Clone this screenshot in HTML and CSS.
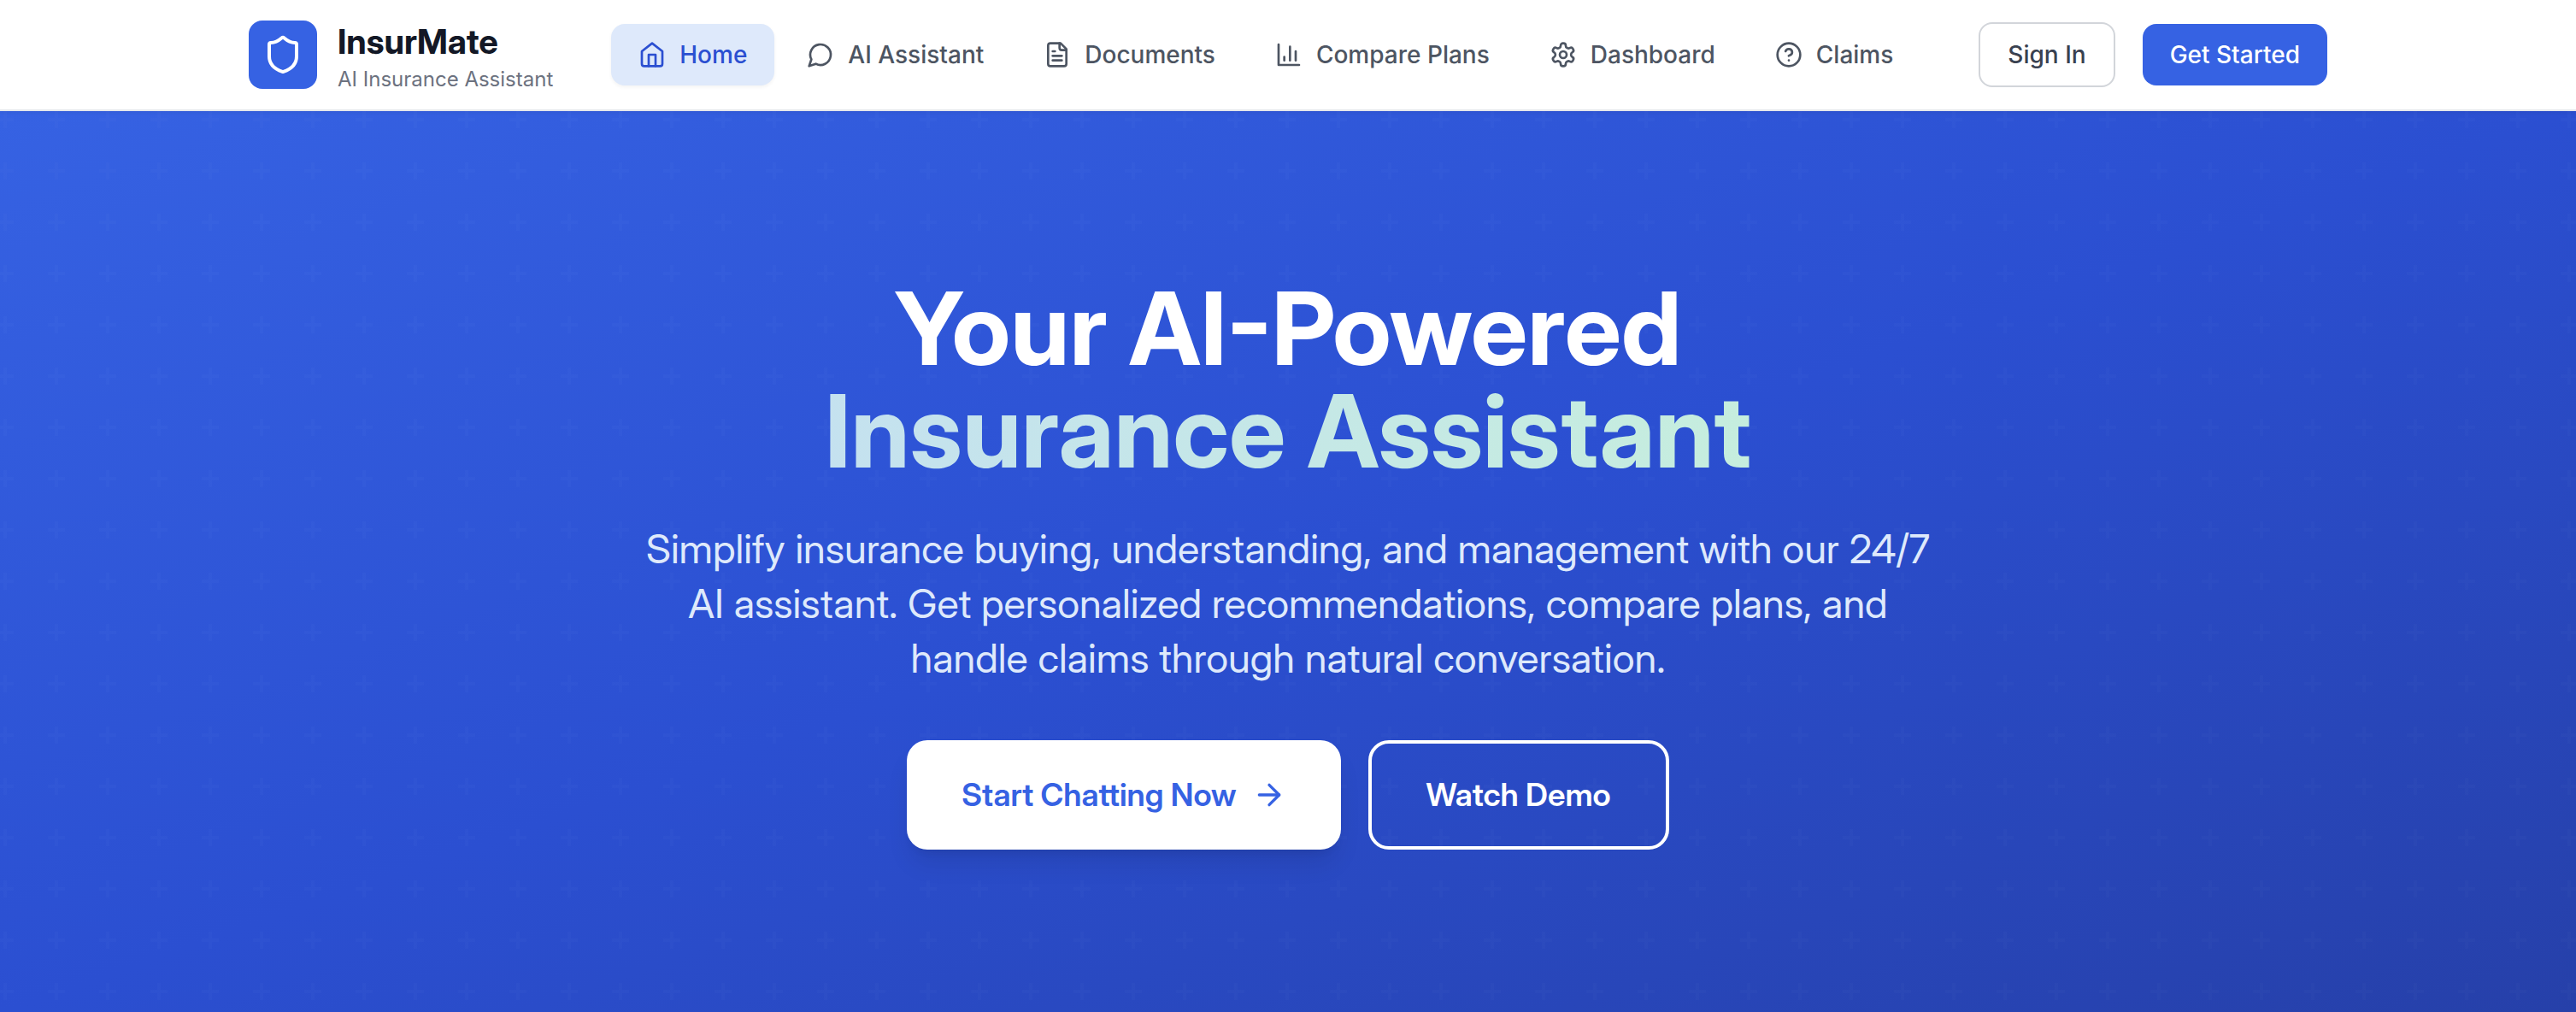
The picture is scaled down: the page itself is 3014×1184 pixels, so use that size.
FILE: index.html
```html
<!DOCTYPE html>
<html lang="en">
<head>
<meta charset="utf-8">
<meta name="viewport" content="width=device-width, initial-scale=1">
<title>InsurMate - AI Insurance Assistant</title>
<link rel="stylesheet" href="styles.css">
</head>
<body>
<header class="header">
  <div class="header-inner">
    <a class="brand" href="#">
      <span class="brand-mark">
        <svg class="icon icon-lg" viewBox="0 0 24 24"><path d="M20 13c0 5-3.500 7.500-7.660 8.950a1 1 0 0 1-.670-.010C7.500 20.500 4 18 4 13V6a1 1 0 0 1 1-1c2 0 4.500-1.200 6.240-2.720a1.170 1.170 0 0 1 1.520 0C14.510 3.810 17 5 19 5a1 1 0 0 1 1 1z"/></svg>
      </span>
      <span class="brand-text">
        <span class="brand-name">InsurMate</span>
        <span class="brand-tagline">AI Insurance Assistant</span>
      </span>
    </a>
    <nav class="nav" aria-label="Main">
      <a class="nav-link nav-link-active" href="#" aria-current="page">
        <svg class="icon" viewBox="0 0 24 24"><path d="m3 9 9-7 9 7v11a2 2 0 0 1-2 2H5a2 2 0 0 1-2-2z"/><path d="M9 22V12h6v10"/></svg>
        Home
      </a>
      <a class="nav-link" href="#">
        <svg class="icon" viewBox="0 0 24 24"><path d="M7.900 20A9 9 0 1 0 4 16.100L2 22Z"/></svg>
        AI Assistant
      </a>
      <a class="nav-link" href="#">
        <svg class="icon" viewBox="0 0 24 24"><path d="M15 2H6a2 2 0 0 0-2 2v16a2 2 0 0 0 2 2h12a2 2 0 0 0 2-2V7Z"/><path d="M14 2v4a2 2 0 0 0 2 2h4"/><path d="M10 9H8"/><path d="M16 13H8"/><path d="M16 17H8"/></svg>
        Documents
      </a>
      <a class="nav-link" href="#">
        <svg class="icon" viewBox="0 0 24 24"><path d="M3 3v18h18"/><path d="M18 17V9"/><path d="M13 17V5"/><path d="M8 17v-3"/></svg>
        Compare Plans
      </a>
      <a class="nav-link" href="#">
        <svg class="icon" viewBox="0 0 24 24"><path d="M12.220 2h-.440a2 2 0 0 0-2 2v.180a2 2 0 0 1-1 1.730l-.430.250a2 2 0 0 1-2 0l-.150-.080a2 2 0 0 0-2.730.730l-.220.380a2 2 0 0 0 .730 2.730l.150.100a2 2 0 0 1 1 1.720v.510a2 2 0 0 1-1 1.740l-.150.090a2 2 0 0 0-.730 2.730l.220.380a2 2 0 0 0 2.730.730l.150-.080a2 2 0 0 1 2 0l.430.250a2 2 0 0 1 1 1.730V20a2 2 0 0 0 2 2h.440a2 2 0 0 0 2-2v-.180a2 2 0 0 1 1-1.730l.430-.250a2 2 0 0 1 2 0l.150.080a2 2 0 0 0 2.730-.730l.220-.390a2 2 0 0 0-.730-2.730l-.150-.080a2 2 0 0 1-1-1.740v-.500a2 2 0 0 1 1-1.740l.150-.090a2 2 0 0 0 .730-2.730l-.220-.380a2 2 0 0 0-2.730-.730l-.150.080a2 2 0 0 1-2 0l-.430-.250a2 2 0 0 1-1-1.730V4a2 2 0 0 0-2-2z"/><circle cx="12" cy="12" r="3"/></svg>
        Dashboard
      </a>
      <a class="nav-link" href="#">
        <svg class="icon" viewBox="0 0 24 24"><circle cx="12" cy="12" r="10"/><path d="M9.090 9a3 3 0 0 1 5.830 1c0 2-3 3-3 3"/><path d="M12 17h.01"/></svg>
        Claims
      </a>
    </nav>
    <div class="account">
      <button class="btn btn-outline" type="button">Sign In</button>
      <button class="btn btn-primary" type="button">Get Started</button>
    </div>
  </div>
</header>
<main class="hero">
  <div class="hero-content">
    <h1 class="hero-title">
      <span class="hero-line">Your AI-Powered</span>
      <span class="hero-line hero-accent">Insurance Assistant</span>
    </h1>
    <p class="hero-copy">Simplify insurance buying, understanding, and management with our 24/7 AI assistant. Get personalized recommendations, compare plans, and handle claims through natural conversation.</p>
    <div class="hero-actions">
      <button class="cta cta-solid" type="button">Start Chatting Now
        <svg class="icon icon-md" viewBox="0 0 24 24"><path d="M5 12h14"/><path d="m12 5 7 7-7 7"/></svg>
      </button>
      <button class="cta cta-ghost" type="button">Watch Demo</button>
    </div>
  </div>
</main>
</body>
</html>
```

FILE: styles.css
```css
:root {
  --blue-600: #3662e3;
  --blue-700: #2b4fd1;
  --blue-800: #2640a9;
  --blue-100: #dee9fb;
  --gray-300: #d2d5da;
  --gray-500: #6c727f;
  --gray-600: #4d5562;
  --gray-700: #394150;
  --gray-900: #131826;
  --font-text: Inter, "Liberation Sans", sans-serif;
  --font-display: "Inter Display", Inter, "Liberation Sans", sans-serif;
}

* {
  box-sizing: border-box;
}

body {
  margin: 0;
  min-height: 100vh;
  display: flex;
  flex-direction: column;
  font-family: var(--font-text);
  background: #fff;
}

a {
  color: inherit;
  text-decoration: none;
}

button {
  font: inherit;
  cursor: pointer;
}

.icon {
  width: 32px;
  height: 32px;
  flex: none;
  fill: none;
  stroke: currentColor;
  stroke-width: 2;
  stroke-linecap: round;
  stroke-linejoin: round;
}

.icon-md {
  width: 40px;
  height: 40px;
}

.icon-lg {
  width: 48px;
  height: 48px;
}

.header {
  position: sticky;
  top: 0;
  z-index: 1;
  border-bottom: 2px solid #e5e7eb;
  background: #fff;
  box-shadow: 0 2px 4px rgb(0 0 0 / 5%);
}

.header-inner {
  max-width: 2560px;
  min-height: 128px;
  margin: 0 auto;
  padding: 0 64px;
  display: flex;
  align-items: center;
  justify-content: space-between;
}

.brand {
  display: flex;
  align-items: center;
  gap: 24px;
}

.brand-mark {
  width: 80px;
  height: 80px;
  display: grid;
  place-items: center;
  border-radius: 16px;
  background: var(--blue-600);
  color: #fff;
}

.brand-text {
  display: flex;
  flex-direction: column;
  padding-top: 2px;
}

.brand-name {
  font-family: var(--font-display);
  font-size: 40px;
  line-height: 56px;
  font-weight: 700;
  color: var(--gray-900);
}

.brand-tagline {
  font-size: 24px;
  line-height: 32px;
  color: var(--gray-500);
}

.nav {
  display: flex;
  gap: 6px;
}

.nav-link {
  display: flex;
  align-items: center;
  gap: 16px;
  padding: 16px 32px;
  border-radius: 16px;
  font-size: 28px;
  line-height: 40px;
  font-weight: 500;
  color: var(--gray-600);
}

.nav-link-active {
  background: var(--blue-100);
  color: var(--blue-700);
  box-shadow: 0 2px 4px rgb(0 0 0 / 5%);
}

.account {
  display: flex;
  align-items: center;
  gap: 32px;
}

.btn {
  padding: 16px 32px;
  border: 0;
  border-radius: 16px;
  font-size: 28px;
  line-height: 40px;
  font-weight: 500;
}

.btn-outline {
  border: 2px solid var(--gray-300);
  background: #fff;
  color: var(--gray-700);
}

.btn-primary {
  background: var(--blue-600);
  color: #fff;
}

.hero {
  flex: 1;
  padding: 194px 64px 192px;
  background:
    url("data:image/svg+xml,%3Csvg xmlns='http://www.w3.org/2000/svg' width='60' height='60'%3E%3Cpath d='M12 8V0H8v8H0v4h8v8h4v-8h8V8z' fill='%23fff' fill-opacity='.015'/%3E%3C/svg%3E") -4px 0,
    linear-gradient(to bottom right, var(--blue-600), var(--blue-700), var(--blue-800));
  font-family: var(--font-display);
  color: #fff;
  text-align: center;
}

.hero-content {
  max-width: 2432px;
  margin: 0 auto;
}

.hero-title {
  margin: 0 0 46px;
  font-size: 118px;
  line-height: 120px;
  font-weight: 700;
}

.hero-line {
  display: block;
}

.hero-accent {
  background: linear-gradient(to right, #c4dafa, #c6f5d3);
  background-clip: text;
  color: transparent;
}

.hero-copy {
  max-width: 1536px;
  margin: 0 auto 64px;
  font-size: 47px;
  line-height: 64px;
  color: var(--blue-100);
}

.hero-actions {
  display: flex;
  justify-content: center;
  gap: 32px;
}

.cta {
  display: flex;
  align-items: center;
  gap: 18px;
  padding: 32px 64px;
  border: 0;
  border-radius: 24px;
  font-size: 37px;
  line-height: 64px;
  font-weight: 600;
}

.cta-solid {
  background: #fff;
  color: var(--blue-600);
  box-shadow: 0 20px 30px -6px rgb(0 0 0 / 10%), 0 8px 12px -8px rgb(0 0 0 / 10%);
}

.cta-ghost {
  padding: 28px 64px;
  border: 4px solid #fff;
  background: transparent;
  color: #fff;
}
```
